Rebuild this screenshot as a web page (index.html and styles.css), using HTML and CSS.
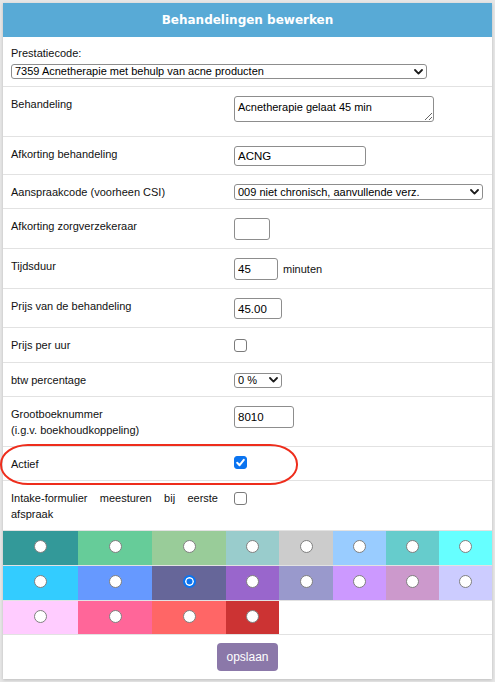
FILE: index.html
```html
<!DOCTYPE html>
<html lang="nl">
<head>
<meta charset="utf-8">
<title>Behandelingen bewerken</title>
<link rel="stylesheet" href="styles.css">
</head>
<body>
<div class="card">
  <div class="card-header"><h1 class="title">Behandelingen bewerken</h1></div>
  <form class="form">
    <div class="row row-stack">
      <label class="label-top" for="code">Prestatiecode:</label>
      <span class="select-wrap">
        <select id="code" class="select select-code">
          <option>7359 Acnetherapie met behulp van acne producten</option>
        </select>
        <svg class="chev" width="9" height="6" viewBox="0 0 9 6"><polyline points="1,1 4.5,4.6 8,1"/></svg>
      </span>
    </div>
    <div class="row">
      <div class="label">Behandeling</div>
      <div class="value"><textarea class="textarea">Acnetherapie gelaat 45 min</textarea></div>
    </div>
    <div class="row">
      <div class="label">Afkorting behandeling</div>
      <div class="value"><input class="input input-abbr" type="text" value="ACNG"></div>
    </div>
    <div class="row">
      <div class="label">Aanspraakcode (voorheen CSI)</div>
      <div class="value">
        <span class="select-wrap">
          <select class="select select-claim">
            <option>009 niet chronisch, aanvullende verz.</option>
          </select>
          <svg class="chev" width="9" height="6" viewBox="0 0 9 6"><polyline points="1,1 4.5,4.6 8,1"/></svg>
        </span>
      </div>
    </div>
    <div class="row">
      <div class="label">Afkorting zorgverzekeraar</div>
      <div class="value"><input class="input input-xs" type="text" value=""></div>
    </div>
    <div class="row">
      <div class="label">Tijdsduur</div>
      <div class="value"><input class="input input-duration" type="text" value="45"><span class="unit">minuten</span></div>
    </div>
    <div class="row">
      <div class="label">Prijs van de behandeling</div>
      <div class="value"><input class="input input-price" type="text" value="45.00"></div>
    </div>
    <div class="row row-check">
      <div class="label">Prijs per uur</div>
      <div class="value"><span class="check-wrap"><input class="check-box" type="checkbox"></span></div>
    </div>
    <div class="row">
      <div class="label">btw percentage</div>
      <div class="value">
        <span class="select-wrap">
          <select class="select select-vat">
            <option>0 %</option>
          </select>
          <svg class="chev" width="9" height="6" viewBox="0 0 9 6"><polyline points="1,1 4.5,4.6 8,1"/></svg>
        </span>
      </div>
    </div>
    <div class="row">
      <div class="label">Grootboeknummer<br>(i.g.v. boekhoudkoppeling)</div>
      <div class="value"><input class="input input-ledger" type="text" value="8010"></div>
    </div>
    <div class="row">
      <div class="label">Actief</div>
      <div class="value value-raised">
        <span class="check-wrap">
          <input class="check-box" type="checkbox" checked>
          <svg class="check-mark" width="13" height="13" viewBox="0 0 13 13"><polyline points="3.2,6.8 5.6,9.2 9.8,3.8"/></svg>
        </span>
      </div>
      <div class="annotation"></div>
    </div>
    <div class="row">
      <div class="label">Intake-formulier meesturen bij eerste afspraak</div>
      <div class="value"><span class="check-wrap"><input class="check-box" type="checkbox"></span></div>
    </div>
  </form>
  <div class="swatches">
    <div class="swatch-row">
      <label class="swatch" style="background:#339999"><input class="radio" type="radio" name="kleur"></label>
      <label class="swatch" style="background:#66cc99"><input class="radio" type="radio" name="kleur"></label>
      <label class="swatch" style="background:#99cc99"><input class="radio" type="radio" name="kleur"></label>
      <label class="swatch" style="background:#99cccc"><input class="radio" type="radio" name="kleur"></label>
      <label class="swatch" style="background:#cccccc"><input class="radio" type="radio" name="kleur"></label>
      <label class="swatch" style="background:#99ccff"><input class="radio" type="radio" name="kleur"></label>
      <label class="swatch" style="background:#66cccc"><input class="radio" type="radio" name="kleur"></label>
      <label class="swatch" style="background:#66ffff"><input class="radio" type="radio" name="kleur"></label>
    </div>
    <div class="swatch-row">
      <label class="swatch" style="background:#33ccff"><input class="radio" type="radio" name="kleur"></label>
      <label class="swatch" style="background:#6699ff"><input class="radio" type="radio" name="kleur"></label>
      <label class="swatch" style="background:#666699"><input class="radio" type="radio" name="kleur" checked></label>
      <label class="swatch" style="background:#9966cc"><input class="radio" type="radio" name="kleur"></label>
      <label class="swatch" style="background:#9999cc"><input class="radio" type="radio" name="kleur"></label>
      <label class="swatch" style="background:#cc99ff"><input class="radio" type="radio" name="kleur"></label>
      <label class="swatch" style="background:#cc99cc"><input class="radio" type="radio" name="kleur"></label>
      <label class="swatch" style="background:#ccccff"><input class="radio" type="radio" name="kleur"></label>
    </div>
    <div class="swatch-row swatch-row-last">
      <label class="swatch" style="background:#ffccff"><input class="radio" type="radio" name="kleur"></label>
      <label class="swatch" style="background:#ff6699"><input class="radio" type="radio" name="kleur"></label>
      <label class="swatch" style="background:#ff6666"><input class="radio" type="radio" name="kleur"></label>
      <label class="swatch" style="background:#cc3333"><input class="radio" type="radio" name="kleur"></label>
    </div>
  </div>
  <div class="actions"><button class="btn" type="button">opslaan</button></div>
</div>
</body>
</html>
```

FILE: styles.css
```css
* { box-sizing: border-box; }

body {
  margin: 0;
  padding: 3px;
  background: #e6e6e6;
  font-family: "Liberation Sans", Arial, sans-serif;
  font-size: 11px;
  color: #111;
}

.card {
  position: relative;
  width: 489px;
  background: #fff;
  box-shadow: 0 1px 3px rgba(0, 0, 0, 0.18);
}

.card-header {
  height: 34px;
  background: #58aad6;
  display: flex;
  align-items: center;
  justify-content: center;
}

.title {
  margin: 0;
  font: bold 12px "DejaVu Sans", Verdana, sans-serif;
  color: #fff;
}

.form { margin: 0; }

.row {
  position: relative;
  display: flex;
  align-items: flex-start;
  padding: 9px 0 8px;
  border-bottom: 1px solid #e2e2e2;
}

.row-check { padding-bottom: 9px; }

.row-stack {
  flex-direction: column;
  padding: 8px 8px 7px;
}

.label-top {
  display: block;
  line-height: 16px;
  margin-bottom: 3px;
}

.label {
  width: 223px;
  flex: none;
  padding: 0 8px;
  line-height: 16px;
  text-align: justify;
}

.value {
  flex: 1;
  padding: 0 8px;
  min-height: 16px;
  display: flex;
  align-items: center;
  gap: 5px;
}

.value-raised { align-items: flex-start; }

.unit { line-height: 16px; }

.input {
  height: 21px;
  margin: 0;
  border: 1px solid #8d8d8d;
  border-radius: 3px;
  padding: 0 3px;
  font: 11.5px "Liberation Sans", Arial, sans-serif;
  color: #000;
  background: #fff;
  outline: none;
}

.input-abbr { width: 132px; height: 20px; }
.input-xs { width: 36px; height: 22px; }
.input-duration { width: 44px; height: 22px; }
.input-price { width: 48px; }
.input-ledger { width: 60px; height: 22px; }

.textarea {
  display: block;
  width: 200px;
  height: 26px;
  margin: 0 0 6px;
  border: 1px solid #8d8d8d;
  border-radius: 3px;
  padding: 4px 3px 0;
  font: 11px "Liberation Sans", Arial, sans-serif;
  color: #000;
  line-height: 13px;
  background: #fff;
}

.select-wrap {
  position: relative;
  display: inline-block;
}

.select {
  display: block;
  appearance: none;
  -webkit-appearance: none;
  height: 15px;
  margin: 0;
  border: 1px solid #8d8d8d;
  border-radius: 3px;
  padding: 0 16px 0 3px;
  font: 11px "Liberation Sans", Arial, sans-serif;
  line-height: 13px;
  color: #000;
  background: #fff;
}

.select-code { width: 416px; }
.select-claim { width: 249px; height: 16px; }
.select-vat { width: 48px; }

.chev {
  position: absolute;
  right: 4px;
  top: 50%;
  margin-top: -3px;
  pointer-events: none;
}

.chev polyline {
  fill: none;
  stroke: #1b1b1b;
  stroke-width: 1.8;
  stroke-linecap: round;
  stroke-linejoin: round;
}

.check-wrap {
  position: relative;
  display: block;
  width: 13px;
  height: 13px;
}

.check-box {
  appearance: none;
  -webkit-appearance: none;
  display: block;
  width: 13px;
  height: 13px;
  margin: 0;
  border: 1px solid #7b7b7b;
  border-radius: 3px;
  background: #fff;
}

.check-box:checked {
  background: #0b74f0;
  border-color: #0b74f0;
}

.check-mark {
  position: absolute;
  left: 0;
  top: 0;
  pointer-events: none;
}

.check-mark polyline {
  fill: none;
  stroke: #fff;
  stroke-width: 2;
  stroke-linecap: round;
  stroke-linejoin: round;
}

.annotation {
  position: absolute;
  left: -3px;
  top: -3px;
  width: 298px;
  height: 41px;
  border: 2px solid #ee2d1c;
  border-radius: 28px / 20px;
  pointer-events: none;
}

.swatch-row {
  display: grid;
  grid-template-columns: 75px 74px 74px 53px 54px 53px 53px 53px;
  height: 35px;
  border-bottom: 1px solid #e2e2e2;
}

.swatch-row-last { height: 34px; }

.swatch {
  display: flex;
  justify-content: center;
  align-items: flex-start;
  padding-top: 9px;
}

.radio {
  appearance: none;
  -webkit-appearance: none;
  width: 13px;
  height: 13px;
  margin: 0;
  border: 1px solid #7f7f7f;
  border-radius: 50%;
  background: #fff;
}

.radio:checked {
  border: 2px solid #0b74f0;
  background: #0b74f0;
  box-shadow: inset 0 0 0 1.5px #fff;
}

.actions {
  display: flex;
  justify-content: center;
  padding: 8px 0;
}

.btn {
  height: 28px;
  padding: 0 9px;
  border: 0;
  border-radius: 4px;
  background: #8b78a9;
  color: #fff;
  font: 12px "Liberation Sans", Arial, sans-serif;
}
```
